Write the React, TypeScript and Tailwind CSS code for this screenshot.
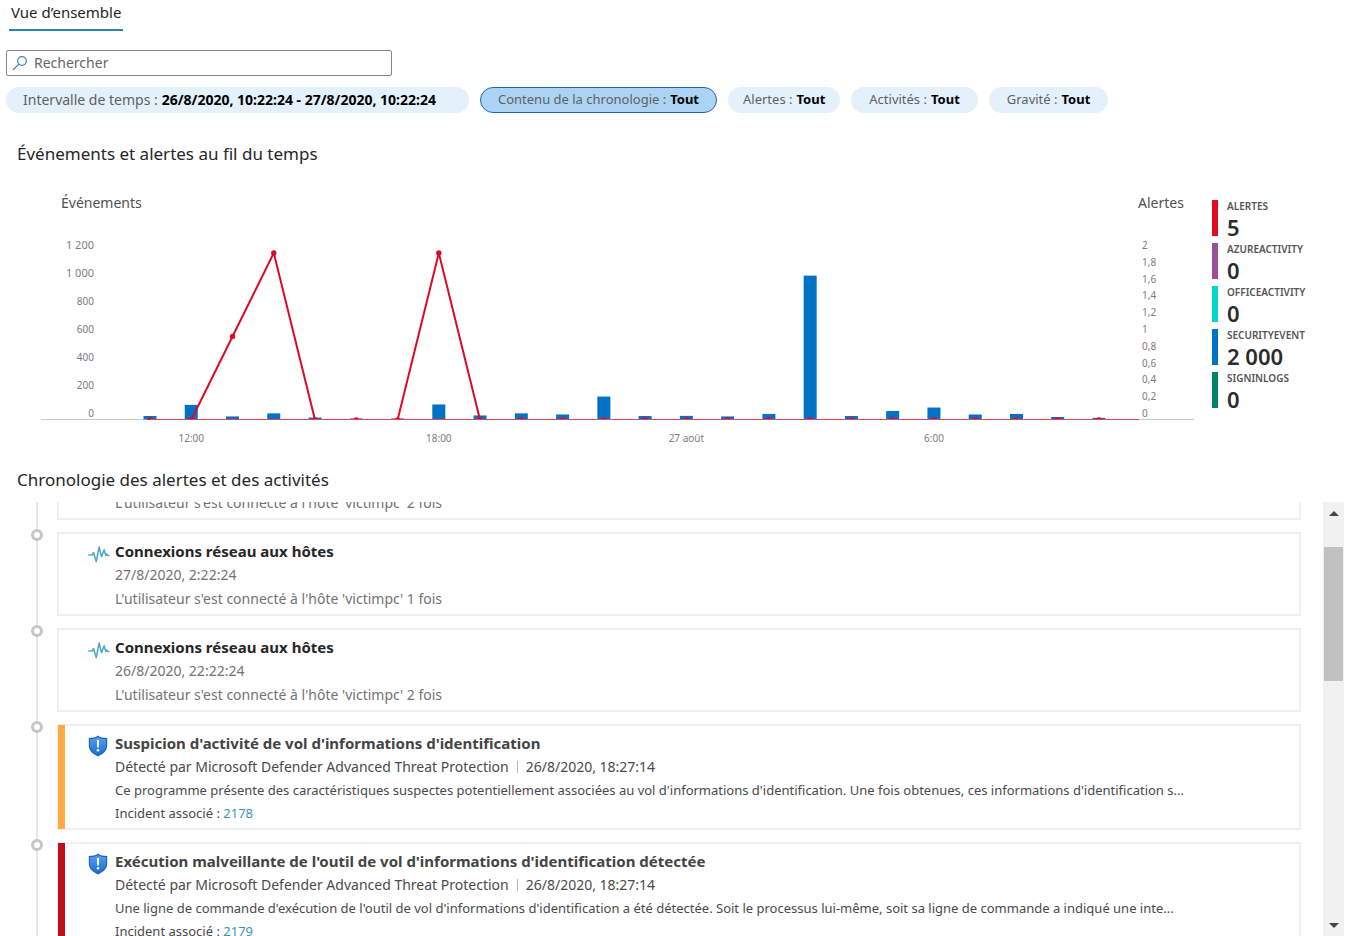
import React, { useLayoutEffect, useRef } from 'react';

interface Filter {
  label: string;
  value: string;
  className: string;
}

interface LegendItem {
  name: string;
  count: string;
  color: string;
}

interface TimelineEntry {
  id: string;
  kind: 'activity' | 'alert';
  title?: string;
  date?: string;
  description: string;
  source?: string;
  incident?: string;
  stripe?: string;
}

const filters: Filter[] = [
  {
    label: 'Intervalle de temps :',
    value: '26/8/2020, 10:22:24 - 27/8/2020, 10:22:24',
    className: 'bg-[#e4f1fb] border-transparent text-sm pl-4 pr-8',
  },
  {
    label: 'Contenu de la chronologie :',
    value: 'Tout',
    className: 'bg-[#abd4f4] border-[#1f66b5] text-[13px] px-[17px]',
  },
  { label: 'Alertes :', value: 'Tout', className: 'bg-[#e4f1fb] border-transparent text-[13px] px-[14px]' },
  { label: 'Activités :', value: 'Tout', className: 'bg-[#e4f1fb] border-transparent text-[13px] px-[17px]' },
  { label: 'Gravité :', value: 'Tout', className: 'bg-[#e4f1fb] border-transparent text-[13px] px-[17px]' },
];

const legend: LegendItem[] = [
  { name: 'ALERTES', count: '5', color: 'bg-[#e3091e]' },
  { name: 'AZUREACTIVITY', count: '0', color: 'bg-[#9b4f96]' },
  { name: 'OFFICEACTIVITY', count: '0', color: 'bg-[#00d8cc]' },
  { name: 'SECURITYEVENT', count: '2 000', color: 'bg-[#0072c6]' },
  { name: 'SIGNINLOGS', count: '0', color: 'bg-[#008368]' },
];

const entries: TimelineEntry[] = [
  {
    id: 'a1',
    kind: 'activity',
    description: "L'utilisateur s'est connecté à l'hôte 'victimpc' 2 fois",
  },
  {
    id: 'a2',
    kind: 'activity',
    title: 'Connexions réseau aux hôtes',
    date: '27/8/2020, 2:22:24',
    description: "L'utilisateur s'est connecté à l'hôte 'victimpc' 1 fois",
  },
  {
    id: 'a3',
    kind: 'activity',
    title: 'Connexions réseau aux hôtes',
    date: '26/8/2020, 22:22:24',
    description: "L'utilisateur s'est connecté à l'hôte 'victimpc' 2 fois",
  },
  {
    id: 'b1',
    kind: 'alert',
    title: "Suspicion d'activité de vol d'informations d'identification",
    source: 'Détecté par Microsoft Defender Advanced Threat Protection',
    date: '26/8/2020, 18:27:14',
    description:
      "Ce programme présente des caractéristiques suspectes potentiellement associées au vol d'informations d'identification. Une fois obtenues, ces informations d'identification s...",
    incident: '2178',
    stripe: 'bg-[#ffa945]',
  },
  {
    id: 'b2',
    kind: 'alert',
    title: "Exécution malveillante de l'outil de vol d'informations d'identification détectée",
    source: 'Détecté par Microsoft Defender Advanced Threat Protection',
    date: '26/8/2020, 18:27:14',
    description:
      "Une ligne de commande d'exécution de l'outil de vol d'informations d'identification a été détectée. Soit le processus lui-même, soit sa ligne de commande a indiqué une inte...",
    incident: '2179',
    stripe: 'bg-[#c20d1f]',
  },
];

// Hourly buckets, starting at 11:00
const events = [25, 105, 22, 44, 14, 8, 8, 108, 29, 44, 36, 165, 25, 26, 22, 40, 1035, 25, 61, 86, 36, 40, 18, 12];
const alerts = [0, 0, 1, 2, 0, 0, 0, 2, 0, 0, 0, 0, 0, 0, 0, 0, 0, 0, 0, 0, 0, 0, 0, 0];
const leftTicks = ['1 200', '1 000', '800', '600', '400', '200', '0'];
const rightTicks = ['2', '1,8', '1,6', '1,4', '1,2', '1', '0,8', '0,6', '0,4', '0,2', '0'];
const hours = [
  { index: 1, label: '12:00' },
  { index: 7, label: '18:00' },
  { index: 13, label: '27 août' },
  { index: 19, label: '6:00' },
];

const BASE = 240;
const xAt = (index: number) => 150 + index * 41.26;
const yAlert = (value: number) => BASE - value * 83.5;

const SearchIcon = () => (
  <svg viewBox="0 0 16 16" className="w-4 h-4 shrink-0" fill="none" stroke="#3a80bd" strokeWidth="1.2">
    <circle cx="10" cy="6" r="4.3" />
    <path d="M6.9 9.1 1.5 14.5" strokeLinecap="round" />
  </svg>
);

const PulseIcon = () => (
  <svg viewBox="0 0 22 22" className="w-[22px] h-[22px]" fill="none" stroke="#56aacb" strokeWidth="1.6" strokeLinejoin="round" strokeLinecap="round">
    <path d="M.8 12H4.200l1.300-2.400L8.200 18.500l3-14.500 2.300 9.800 2.600-7 1.700 5.600.9-1.400 1.100 1.500H21" />
  </svg>
);

const ShieldIcon = () => (
  <svg viewBox="0 0 20 22" className="w-5 h-[22px]">
    <defs>
      <linearGradient id="shield" x1="0" y1="0" x2="0" y2="1">
        <stop offset="0" stopColor="#559fec" />
        <stop offset="1" stopColor="#1c6fd0" />
      </linearGradient>
    </defs>
    <path d="M10 .5C12 2.3 15.500 3 19.200 3v7.500c0 5.500-4.500 8.700-9.200 11-4.700-2.300-9.200-5.500-9.200-11V3C4.500 3 8 2.300 10 .5Z" fill="#1b64bb" />
    <path d="M10 1.900C12.200 3.400 15 4 18.100 4.100v6.400c0 4.700-3.900 7.600-8.100 9.700-4.200-2.100-8.100-5-8.100-9.700V4.100C5 4 7.800 3.400 10 1.900Z" fill="url(#shield)" />
    <path d="M8.900 5h2.200l-.3 7.500H9.200Z" fill="#fff" />
    <circle cx="10" cy="15.200" r="1.250" fill="#fff" />
  </svg>
);

const EventsChart = () => {
  const points = [...alerts.map((value, i) => `${xAt(i)},${yAlert(value)}`), `1139,${BASE}`].join(' ');

  return (
    <svg viewBox="0 0 1212 270" className="flex-1 min-w-0" role="img" aria-label="Événements et alertes">
      <g fontSize="14" fill="#505050">
        <text x="61" y="28">Événements</text>
        <text x="1138" y="28">Alertes</text>
      </g>
      <g fontSize="10" fill="#7c7c7c">
        {leftTicks.map((tick, i) => (
          <text key={tick} x="94" y={68.6 + i * 28.1} textAnchor="end" fontSize={i < 2 ? 11 : 10}>{tick}</text>
        ))}
        {rightTicks.map((tick, i) => (
          <text key={tick} x="1142" y={69 + i * 16.8}>{tick}</text>
        ))}
        {hours.map((hour) => (
          <text key={hour.label} x={xAt(hour.index)} y="262" textAnchor="middle">{hour.label}</text>
        ))}
      </g>
      <clipPath id="plot">
        <rect x="0" y="0" width="1212" height={BASE} />
      </clipPath>
      <rect x="41" y={BASE - 1} width="1153" height="1" fill="#c8c8c8" />
      {events.map((value, i) => (
        <rect key={i} x={xAt(i) - 6.5} y={BASE - value * 0.139 - 0.5} width="13" height={value * 0.139} fill="#0072c6" />
      ))}
      <g clipPath="url(#plot)">
        <polyline points={points} fill="none" stroke="#de0a24" strokeWidth="2" />
        {alerts.map((value, i) => (
          <circle key={i} cx={xAt(i)} cy={yAlert(value)} r="2.7" fill="#de0a24" />
        ))}
      </g>
      <rect x="150" y={BASE - 1} width="989" height="1" fill="#e0475c" />
    </svg>
  );
};

const TimelineCard: React.FC<{ entry: TimelineEntry }> = ({ entry }) => {
  const isAlert = entry.kind === 'alert';

  return (
    <li className="flex">
      <div className="relative w-3 mr-[14px] shrink-0">
        <div className="absolute inset-y-0 left-[5px] w-0.5 bg-[#e6e6e6]" />
        <div className="relative w-3 h-3 -mt-[3px] rounded-full border-[3px] border-[#c6c6c6] bg-white" />
      </div>
      <article className="flex flex-1 min-w-0 mb-3 border-2 border-[#f0f0f0]">
        <div className={`w-[7px] -my-px -ml-px shrink-0 ${entry.stripe ?? ''}`} />
        <div className="w-[50px] pl-[23px] pt-[9px] shrink-0">
          {entry.title && (isAlert ? <ShieldIcon /> : <PulseIcon />)}
        </div>
        <div className={`min-w-0 pt-[5px] pb-[3px] ${isAlert ? 'text-[#4a4a4a]' : 'text-[#737373]'}`}>
          {entry.title && (
            <h3 className={`text-[15px] leading-6 font-bold ${isAlert ? 'text-[#444444]' : 'text-[#262626]'}`}>
              {entry.title}
            </h3>
          )}
          {entry.date && (
            <p className="flex items-center text-sm leading-6">
              {entry.source && (
                <>
                  <span>{entry.source}</span>
                  <span className="w-px h-3 mx-2 bg-[#b4b4b4]" />
                </>
              )}
              <span>{entry.date}</span>
            </p>
          )}
          <p className={`truncate ${isAlert ? 'text-[13px] leading-[23px]' : 'text-sm leading-6'}`}>{entry.description}</p>
          {entry.incident && (
            <p className="text-[13px] leading-[23px]">
              Incident associé : <a href="#" className="text-[#3c93b5]">{entry.incident}</a>
            </p>
          )}
        </div>
      </article>
    </li>
  );
};

const Timeline = () => {
  const listRef = useRef<HTMLUListElement>(null);

  useLayoutEffect(() => {
    if (listRef.current) listRef.current.scrollTop = 18;
  }, []);

  const scroll = (delta: number) => listRef.current?.scrollBy({ top: delta, behavior: 'smooth' });

  return (
    <div className="flex flex-1 min-h-0 mt-[9px] pr-2">
      <ul ref={listRef} className="flex-1 min-w-0 overflow-y-auto pl-[31px] pr-[22px] [scrollbar-width:none]">
        {entries.map((entry) => (
          <TimelineCard key={entry.id} entry={entry} />
        ))}
      </ul>
      <div className="flex flex-col w-[21px] bg-[#f1f1f1]">
        <button type="button" aria-label="Défiler vers le haut" className="flex justify-center items-center h-[22px]" onClick={() => scroll(-40)}>
          <svg viewBox="0 0 10 5" className="w-[10px] h-[5px]" fill="#454545"><path d="M5 0l5 5H0Z" /></svg>
        </button>
        <div className="flex-1 pt-[23px] px-px">
          <div className="h-[134px] bg-[#c1c1c1]" />
        </div>
        <button type="button" aria-label="Défiler vers le bas" className="flex justify-center items-center h-[22px]" onClick={() => scroll(40)}>
          <svg viewBox="0 0 10 5" className="w-[10px] h-[5px]" fill="#454545"><path d="M5 5l5-5H0Z" /></svg>
        </button>
      </div>
    </div>
  );
};

const App: React.FC = () => {
  return (
    <div className="flex flex-col h-screen overflow-hidden bg-white font-['Noto_Sans','Open_Sans',sans-serif] text-[#262626]">
      <nav className="flex px-[9px]">
        <a href="#" className="block h-[31px] px-0.5 border-b-2 border-[#2f80b9] text-[15px] leading-[25px]">Vue d’ensemble</a>
      </nav>

      <label className="flex items-center gap-[6px] w-[386px] h-[26px] mt-[19px] ml-[6px] px-[5px] border border-[#868686] rounded-xs">
        <SearchIcon />
        <input
          type="search"
          aria-label="Rechercher"
          placeholder="Rechercher"
          className="flex-1 min-w-0 text-sm leading-5 outline-none placeholder:text-[#666666]"
        />
      </label>

      <div className="flex flex-wrap gap-[11px] mt-[11px] pl-[6px]">
        {filters.map((filter) => (
          <button
            key={filter.label}
            type="button"
            className={`flex items-center gap-1 h-[26px] border rounded-full text-[#5f5f5f] whitespace-nowrap ${filter.className}`}
          >
            {filter.label} <span className="font-bold text-black">{filter.value}</span>
          </button>
        ))}
      </div>

      <h2 className="mt-7 pl-[17px] text-[17px] leading-[26px]">Événements et alertes au fil du temps</h2>
      <section className="flex items-start mt-[13px]">
        <EventsChart />
        <ul className="flex flex-col gap-[7px] w-[140px] pt-5">
          {legend.map((item) => (
            <li key={item.name} className="flex gap-[9px] h-9">
              <div className={`w-[6px] ${item.color}`} />
              <div className="font-semibold">
                <div className="text-[10px] leading-3 text-[#555555]">{item.name}</div>
                <div className="text-[22px] leading-[30px] text-[#2b2b2b]">{item.count}</div>
              </div>
            </li>
          ))}
        </ul>
      </section>

      <h2 className="mt-[17px] pl-[17px] text-[17px] leading-[26px]">Chronologie des alertes et des activités</h2>
      <Timeline />
    </div>
  );
};

export default App;
